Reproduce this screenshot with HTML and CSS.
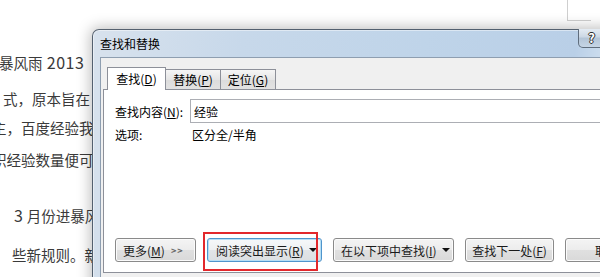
FILE: index.html
```html
<!doctype html>
<html>
    <head>
        <meta charset="utf-8">
        <title>查找和替换</title>
        <link rel="stylesheet" href="styles.css">
    </head>
    <body>
        <div class="doc">
            <div class="doc-box"></div>
            <p class="line l1">暴风雨 <span class="num">2013</span></p>
            <p class="line l2">式，原本旨在</p>
            <p class="line l3">主，百度经验我</p>
            <p class="line l4">积经验数量便可</p>
            <p class="line l5"><span class="num">3</span> 月份进暴风</p>
            <p class="line l6">些新规则。新</p>
        </div>

        <div class="dialog">
            <div class="titlebar">
                <span class="title">查找和替换</span>
                <div class="caption-buttons">
                    <button class="cap-help">?</button>
                    <button class="cap-close">×</button>
                </div>
            </div>
            <div class="client">
                <div class="tabs">
                    <div class="tab active">查找(<u>D</u>)</div>
                    <div class="tab">替换(<u>P</u>)</div>
                    <div class="tab">定位(<u>G</u>)</div>
                </div>
                <div class="panel">
                    <div class="find-row">
                        <label class="field-label" for="find">查找内容(<u>N</u>):</label>
                        <input class="field" id="find" type="text" value="经验">
                    </div>
                    <div class="options-row">
                        <span class="field-label">选项:</span>
                        <span class="options-value">区分全/半角</span>
                    </div>
                    <div class="buttons">
                        <button class="btn btn-more">更多(<u>M</u>) <span class="chev">&gt;&gt;</span></button>
                        <button class="btn btn-focus btn-read">阅读突出显示(<u>R</u>) <span class="arrow"></span></button>
                        <button class="btn btn-in">在以下项中查找(<u>I</u>) <span class="arrow"></span></button>
                        <button class="btn btn-next">查找下一处(<u>F</u>)</button>
                        <button class="btn btn-cancel">取消</button>
                    </div>
                </div>
            </div>
        </div>

        <div class="mark"></div>
    </body>
</html>
```

FILE: styles.css
```css
:root {
    --ui-font: "Noto Sans CJK SC", "Microsoft YaHei", sans-serif;
    --tab-border: #8d9099;
    --btn-border: #8a8a8a;
}

html, body {
    margin: 0;
    width: 600px;
    height: 277px;
    overflow: hidden;
    background: #fff;
}

body {
    position: relative;
    font-family: var(--ui-font);
}

/* document behind the dialog */
.doc {
    color: #3a3a3a;
    font-size: 14.5px;
    line-height: 20px;
}

.doc-box {
    margin-left: 567px;
    width: 23px;
    height: 20px;
    border-left: 1px solid #cfcfcf;
    border-bottom: 1px solid #cfcfcf;
}

.line {
    margin: 0;
    white-space: nowrap;
}

.num {
    font-size: 16px;
    letter-spacing: 0.5px;
    margin-left: 1px;
}

.l1 { margin-top: 31px; margin-left: -1px; }
.l2 { margin-top: 16px; margin-left: 3px; }
.l3 { margin-top: 9px; margin-left: -8px; }
.l4 { margin-top: 12px; margin-left: -8px; }
.l5 { margin-top: 35px; margin-left: 13px; }
.l6 { margin-top: 19px; margin-left: 12px; }

/* dialog window */
.dialog {
    position: absolute;
    left: 92px;
    top: 29px;
    width: 562px;
    height: 270px;
    box-sizing: border-box;
    border: 1px solid rgba(55, 66, 80, 0.8);
    border-radius: 7px 7px 0 0;
    background: linear-gradient(100deg, #d8e2ed 0%, #c7d8ea 25%, #bfd4e9 55%, #b9cfe7 80%, #d2e1f0 86%, #c3d6ea 92%);
    box-shadow: 0 0 14px 2px rgba(0, 0, 0, 0.25), inset 0 0 0 1px rgba(255, 255, 255, 0.45);
    font-size: 12px;
    color: #000;
}

.titlebar {
    height: 27px;
    display: flex;
    justify-content: space-between;
    align-items: flex-start;
    padding: 0 5px 0 7px;
}

.title {
    align-self: center;
    line-height: 16px;
    padding-top: 1px;
}

.caption-buttons {
    display: flex;
    margin-top: -1px;
}

.cap-help,
.cap-close {
    all: unset;
    height: 19px;
    box-sizing: border-box;
    border: 1px solid #5f6d7d;
    border-top: none;
    text-align: center;
    font-weight: bold;
    color: #fff;
}

.cap-help {
    width: 27px;
    border-radius: 0 0 0 5px;
    background: linear-gradient(#e4ebf3, #cbd7e4 45%, #b3c4d7 50%, #c6d5e5);
    font-size: 13px;
    line-height: 18px;
    text-shadow: 1px 0 #2b2b2b, -1px 0 #2b2b2b, 0 1px #2b2b2b, 0 -1px #2b2b2b;
}

.cap-close {
    width: 43px;
    border-left: none;
    border-radius: 0 0 5px 0;
    background: linear-gradient(#e8a493, #d4634a 45%, #c23b1d 50%, #d06a4b);
    font-size: 15px;
    line-height: 17px;
}

.client {
    margin: 0 7px;
    height: 300px;
    background: #f0f0f0;
    border-top: 1px solid #8e9eb0;
    border-left: 1px solid #8e9eb0;
}

.tabs {
    display: flex;
    align-items: flex-end;
    margin-left: 6px;
    padding-top: 9px;
}

.tab {
    width: 55px;
    height: 20px;
    box-sizing: border-box;
    border: 1px solid var(--tab-border);
    border-bottom: none;
    border-left: none;
    background: linear-gradient(#f5f5f5, #e6e6e6 50%, #dcdcdc 51%, #e2e2e2);
    text-align: center;
    line-height: 19px;
}

.tab.active {
    position: relative;
    z-index: 1;
    width: 59px;
    height: 23px;
    margin-bottom: -1px;
    border-left: 1px solid var(--tab-border);
    background: #fff;
    line-height: 22px;
}

.panel {
    margin-left: 2px;
    height: 184px;
    box-sizing: border-box;
    border: 1px solid var(--tab-border);
    background: #fff;
    padding: 9px 0 10px 11px;
    display: flex;
    flex-direction: column;
    overflow: hidden;
}

.find-row {
    display: flex;
    align-items: center;
}

.field-label {
    width: 75px;
    flex: none;
}

.field {
    all: unset;
    width: 420px;
    height: 24px;
    box-sizing: border-box;
    border: 1px solid #acaeb4;
    padding-left: 3px;
    font-family: var(--ui-font);
    font-size: 12px;
    background: #fff;
}

.options-row {
    display: flex;
    margin-top: 4px;
    line-height: 16px;
}

.options-value {
    padding-left: 2px;
}

.buttons {
    margin-top: auto;
    display: flex;
    gap: 11px;
}

.btn {
    all: unset;
    flex: none;
    display: flex;
    align-items: center;
    height: 24px;
    box-sizing: border-box;
    border: 1px solid var(--btn-border);
    border-radius: 3px;
    background: linear-gradient(#f4f4f4, #ececec 50%, #e0e0e0 51%, #d9d9d9);
    box-shadow: inset 0 0 0 1px #fbfbfb;
    font-family: var(--ui-font);
    font-size: 12px;
    color: #1a1a1a;
    white-space: nowrap;
}

.btn-focus {
    border-color: #4f95cc;
    box-shadow: inset 0 0 0 1px #b4def5;
    background: linear-gradient(#f6f8fa, #eef0f2 50%, #e2e5e8 51%, #dcdfe2);
}

.btn-more { width: 81px; padding-left: 7px; }
.btn-read { width: 115px; padding-left: 8px; }
.btn-in { width: 121px; padding-left: 7px; }
.btn-next { width: 89px; justify-content: center; }
.btn-cancel { width: 84px; justify-content: center; }

.chev {
    margin-left: 6px;
    font-size: 9px;
    font-weight: bold;
    letter-spacing: 1px;
    color: #666;
}

.arrow {
    margin-left: 5px;
    width: 0;
    height: 0;
    border-left: 4px solid transparent;
    border-right: 4px solid transparent;
    border-top: 4px solid #111;
}

/* red annotation frame drawn over the screenshot */
.mark {
    position: absolute;
    left: 203px;
    top: 232px;
    width: 115px;
    height: 39px;
    box-sizing: border-box;
    border: 2px solid #e2282c;
}
```
